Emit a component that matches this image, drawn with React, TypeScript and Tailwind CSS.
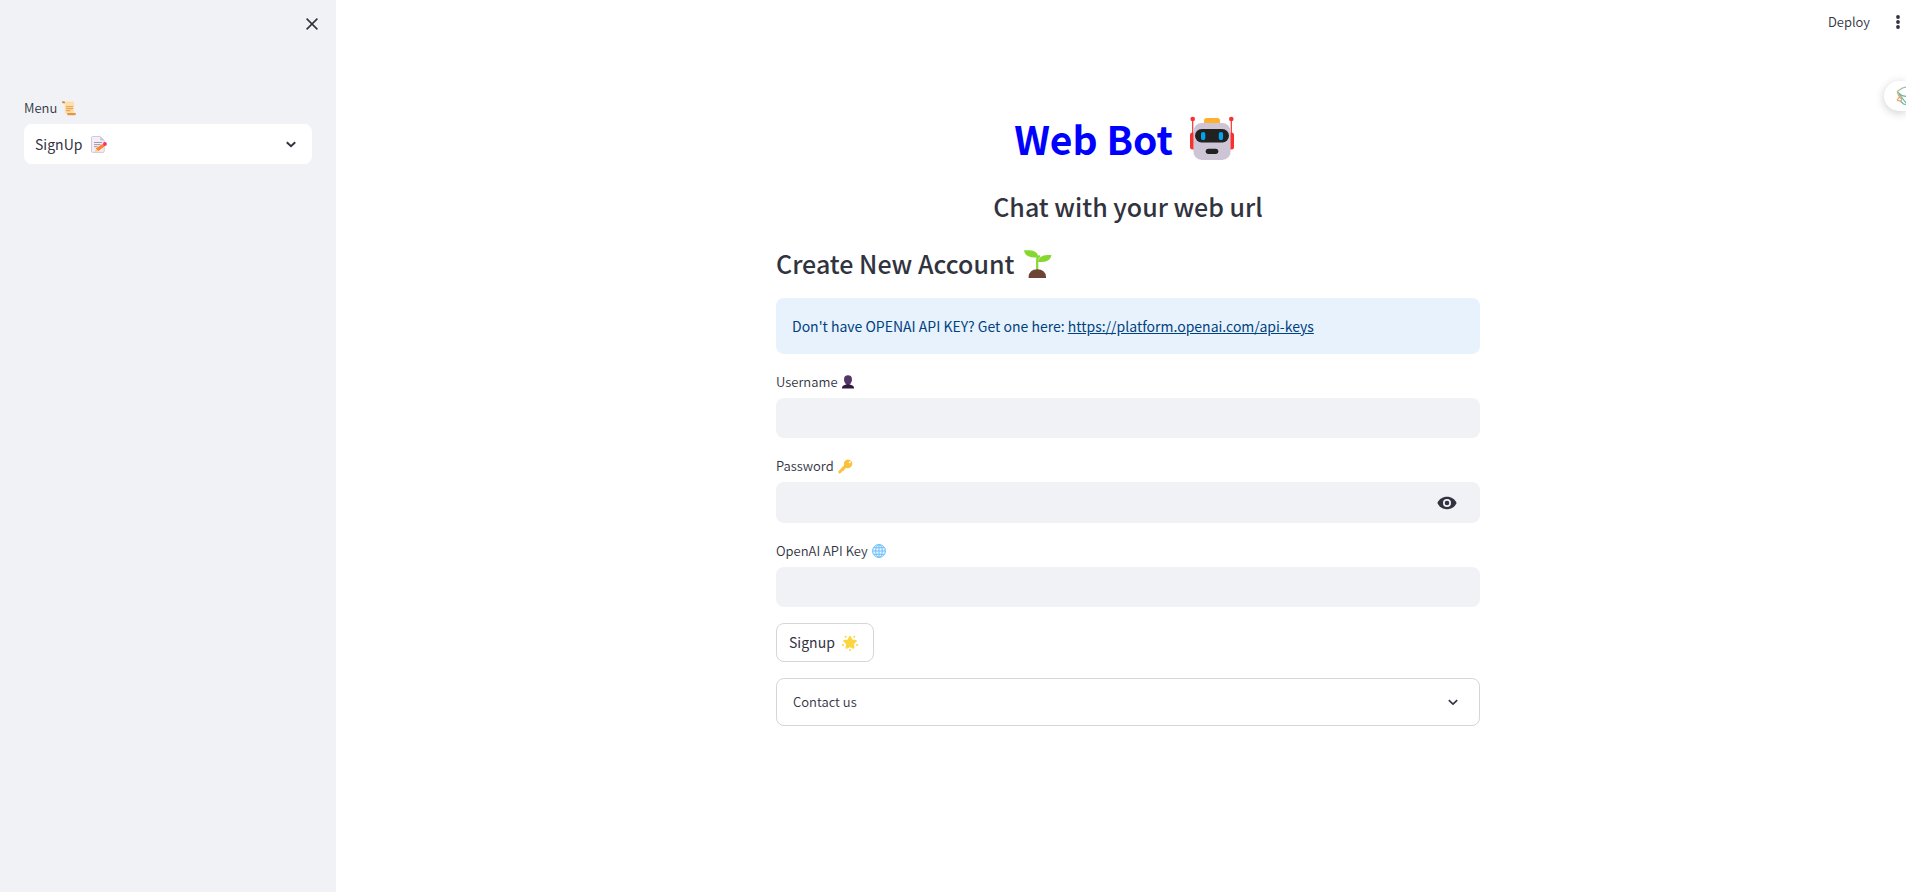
import type { ReactNode, SVGProps } from "react";

function Emoji({ label, children, ...props }: SVGProps<SVGSVGElement> & { label: string; children: ReactNode }) {
  return (
    <svg role="img" aria-label={label} {...props}>
      {children}
    </svg>
  );
}

function Scroll() {
  return (
    <Emoji label="scroll" viewBox="0 0 15 15" className="h-[15px] w-[15px] shrink-0">
      <path d="M1.6 .5H10.8Q12 .5 12 1.8V13H4.6Q2.8 13 2.8 11.2V3Z" fill="#ffdea7" />
      <path d="M0 1.2Q0 .3 1 .3H2Q3 .5 3 1.5V2.2H1Q0 2 0 1.2Z" fill="#d3883e" />
      <path d="M4.8 12H13.3Q14 12 14 12.8 14 14.2 12.6 14.2H5.2Q6 13.4 4.8 12Z" fill="#e19747" />
      <path d="M4 5.6H11M4 7.6H11M4 9.6H8.4" stroke="#e8a860" strokeWidth="1.1" />
    </Emoji>
  );
}

function Memo() {
  return (
    <Emoji label="memo" viewBox="0 0 16 17" className="h-[17px] w-4">
      <path d="M1.6 .5H9.2L13.2 4.5V15.3Q13.2 16.4 12 16.4H1.6Q.5 16.4 .5 15.3V1.6Q.5 .5 1.6 .5Z" fill="#f3eef8" stroke="#cdc4d6" strokeWidth=".9" />
      <path d="M9.2 .5V3.4Q9.2 4.5 10.3 4.5H13.2Z" fill="#cdc4d6" />
      <path d="M3 6.5H11M3 8.6H9.5M3 10.7H6.5" stroke="#998ea4" strokeWidth=".9" />
      <path d="M11.4 8 13.7 10.3 7.2 15.2 4.8 12.6Z" fill="#ff822d" />
      <path d="M4.8 12.6 7.2 15.2 4 16Z" fill="#ffce7c" />
      <circle cx="13.9" cy="8" r="1.9" fill="#f92f60" />
    </Emoji>
  );
}

function Robot() {
  return (
    <Emoji label="robot" viewBox="0 0 44 45" className="h-[45px] w-11">
      <path d="M2.7 3V20M41.3 3V20" stroke="#f8312f" strokeWidth="1.2" />
      <circle cx="2.7" cy="3" r="2.3" fill="#f8312f" />
      <circle cx="41.3" cy="3" r="2.3" fill="#f8312f" />
      <rect x="0" y="16.5" width="7" height="17" rx="2.5" fill="#f8312f" />
      <rect x="37" y="16.5" width="7" height="17" rx="2.5" fill="#f8312f" />
      <rect x="14" y="2" width="16" height="8" rx="2.5" fill="#ffb02e" />
      <rect x="3.4" y="7" width="37.2" height="37" rx="8.5" fill="#cdc4d6" />
      <rect x="5" y="13" width="34" height="13.5" rx="6.7" fill="#212121" />
      <rect x="11" y="16" width="4.3" height="8.2" rx="2.1" fill="#00a6ed" />
      <rect x="28.8" y="16" width="4.3" height="8.2" rx="2.1" fill="#00a6ed" />
      <rect x="15.7" y="32.7" width="12.6" height="5.2" rx="2.6" fill="#212121" />
    </Emoji>
  );
}

function Seedling() {
  return (
    <Emoji label="seedling" viewBox="0 0 28 28" className="h-7 w-7">
      <path d="M13.2 20V9.5Q13.2 7 16 6" fill="none" stroke="#86d72f" strokeWidth="2.2" />
      <path d="M0 .2H5.3Q14.3 .6 14.3 7.6H10.5Q1 7.2 0 .2Z" fill="#86d72f" />
      <path d="M27.5 5.1H23.5Q14.8 5.4 13.7 12H18Q26.5 11.8 27.5 5.1Z" fill="#86d72f" />
      <path d="M4.6 28V26.8Q5.3 19.2 13.3 19.2T22 26.8V28Z" fill="#6d4534" />
    </Emoji>
  );
}

function Bust() {
  return (
    <Emoji label="bust in silhouette" viewBox="0 0 12 14" className="h-3.5 w-3">
      <path d="M0 13.5V12.6Q.1 10.5 2.6 10L4.4 9.4V8H7.6V9.4L9.4 10Q11.9 10.5 12 12.6V13.5Z" fill="#321b41" />
      <path d="M2.1 4Q2.1 .3 6 .3T9.9 4V5.2Q9.4 9.4 6 9.4T2.1 5.2Z" fill="#533566" />
    </Emoji>
  );
}

function KeyEmoji() {
  return (
    <Emoji label="key" viewBox="0 0 15 15" className="h-[15px] w-[15px]">
      <path fillRule="evenodd" d="M9.9 .4A4.4 4.4 0 1 1 8.6 9L7.4 9.3 7.2 10.4 6 10.5 5.6 12 4.2 12.2 3 13.8Q2 14.8 1 14.3 .2 13.8 .3 12.4L6.1 6.3Q5 1.3 9.9 .4ZM11.2 2.4A1 1 0 1 0 12.6 3.8 1 1 0 0 0 11.2 2.4Z" fill="#f9c23c" />
    </Emoji>
  );
}

function Globe() {
  return (
    <Emoji label="globe with meridians" viewBox="0 0 14 14" className="h-3.5 w-3.5">
      <circle cx="7" cy="7" r="7" fill="#e5f4ff" />
      <g fill="none" stroke="#6fc0fa" strokeWidth="1">
        <circle cx="7" cy="7" r="6.4" />
        <ellipse cx="7" cy="7" rx="3.3" ry="6.4" />
        <path d="M7 .6V13.4M.6 7H13.4M1.5 3.7H12.5M1.5 10.3H12.5" />
      </g>
    </Emoji>
  );
}

function Star() {
  return (
    <Emoji label="glowing star" viewBox="0 0 16 16" className="h-4 w-4">
      <path d="M8 1.6 9.8 5.2 14 5.8 11 8.7 11.7 13 8 11.2 4.3 13 5 8.7 2 5.8 6.2 5.2Z" fill="#fcd53f" stroke="#fcd53f" strokeWidth="1.6" strokeLinejoin="round" />
      <g fill="#fcd53f">
        <circle cx="3.6" cy="1.7" r="1" />
        <circle cx="12.4" cy="1.7" r="1" />
        <circle cx="1" cy="10" r="1" />
        <circle cx="15" cy="10" r="1" />
        <circle cx="8" cy="15" r="1" />
      </g>
    </Emoji>
  );
}

function Chevron({ className }: { className: string }) {
  return (
    <svg aria-hidden="true" viewBox="0 0 10 7" className={className}>
      <path d="M.8 1.2 5 5.2 9.2 1.2" fill="none" stroke="currentColor" />
    </svg>
  );
}

function Field({ id, label, icon, type = "text" }: { id: string; label: string; icon: ReactNode; type?: string }) {
  return (
    <div className="flex flex-col">
      <label htmlFor={id} className="flex h-7 items-start gap-1 text-[13px] leading-6">
        {label}
        <span className="flex h-6 items-center">{icon}</span>
      </label>
      <div className="flex min-h-10 rounded-lg bg-[#f0f2f6]">
        <input id={id} type={type} className="min-w-0 flex-1 bg-transparent px-3 text-[14px] outline-none" />
        {type === "password" && (
          <button type="button" aria-label="Show password" className="flex h-[41px] w-[66px] items-center justify-center">
            <svg viewBox="0 0 20 14" className="h-3.5 w-5">
              <path fillRule="evenodd" d="M10 .8C5.6 .8 2 3.2 .4 7 2 10.8 5.6 13.2 10 13.2S18 10.8 19.6 7C18 3.2 14.4 .8 10 .8ZM10 11A4 4 0 1 1 10 3 4 4 0 0 1 10 11ZM10 9.3A2.3 2.3 0 1 0 10 4.7 2.3 2.3 0 0 0 10 9.3Z" fill="currentColor" />
            </svg>
          </button>
        )}
      </div>
    </div>
  );
}

export default function App() {
  return (
    <div className="flex min-h-screen overflow-hidden bg-white font-['Noto_Sans_CJK_SC','Noto_Sans',sans-serif] font-[350] text-[#31333f]">
      <aside className="w-[336px] shrink-0 bg-[#f0f2f6] px-6">
        <div className="flex h-12 items-center justify-end">
          <button type="button" aria-label="Close sidebar" className="flex h-6 w-6 translate-x-3 items-center justify-center">
            <svg viewBox="0 0 12 12" className="h-3 w-3">
              <path d="M.6 .6 11.4 11.4M11.4 .6 .6 11.4" stroke="currentColor" strokeWidth="1.6" />
            </svg>
          </button>
        </div>
        <label htmlFor="menu" className="mt-12 flex h-7 items-start gap-[5px] text-[13px] leading-6">
          Menu
          <span className="flex h-6 items-center"><Scroll /></span>
        </label>
        <div className="relative">
          <select id="menu" className="h-10 w-full appearance-none rounded-lg bg-white px-[11px] text-[14px] font-normal outline-none">
            <option>SignUp</option>
            <option>Login</option>
          </select>
          <span className="pointer-events-none absolute top-3 left-[67px]"><Memo /></span>
          <Chevron className="pointer-events-none absolute top-[17px] right-4 h-[7px] w-2.5 stroke-2" />
        </div>
      </aside>

      <div className="relative min-w-0 flex-1">
        <header className="flex h-11 items-center justify-end gap-6 pr-1">
          <button type="button" className="text-[13px]">Deploy</button>
          <button type="button" aria-label="More options" className="flex w-2 justify-center">
            <svg viewBox="0 0 4 14" className="h-3.5 w-1" fill="currentColor">
              <circle cx="2" cy="2" r="1.9" />
              <circle cx="2" cy="7" r="1.9" />
              <circle cx="2" cy="12" r="1.9" />
            </svg>
          </button>
        </header>

        <button type="button" aria-label="Open assistant" className="absolute top-[81px] right-0 flex h-[30px] w-[22px] items-center justify-end rounded-l-full bg-white shadow-[0_2px_10px_rgba(0,0,0,0.2)]">
          <svg viewBox="0 0 10 20" className="h-5 w-2.5" fill="none" strokeWidth="1.2">
            <path d="M10 1.2 6.5 2 1.2 5.6" stroke="#9dbb9c" />
            <path d="M1.2 5.6 6 9.6 10 10.4" stroke="#62b7a1" />
            <path d="M1.2 5.6 2.4 9 4 11.6M1 14.4 3 11.4 6 12.6 5 15 1 14.4" stroke="#eda26c" />
            <path d="M3 8 10 17M4.5 15.2 7.5 18 10 18.4" stroke="#62b7a1" />
          </svg>
        </button>

        <main className="pl-[14px]">
          <div className="mx-auto max-w-[704px] pt-[58px]">
            <h1 className="flex h-[73px] items-center justify-center gap-[17px] pr-2 text-[39px] font-bold text-[#0000ff]">
              Web Bot
              <Robot />
            </h1>
            <h2 className="flex h-16 items-center justify-center text-[25px] font-medium">Chat with your web url</h2>
            <h2 className="flex h-[50px] items-center gap-2.5 text-[25px] font-medium">
              Create New Account
              <Seedling />
            </h2>
            <div className="mt-[9px] flex h-14 items-center rounded-lg bg-[#e8f2fc] px-4 text-[14px] font-normal text-[#004280]">
              <p>
                Don't have OPENAI API KEY? Get one here:{" "}
                <a href="https://platform.openai.com/api-keys" className="underline">https://platform.openai.com/api-keys</a>
              </p>
            </div>
            <form className="mt-4 flex flex-col gap-4">
              <Field id="username" label="Username" icon={<Bust />} />
              <Field id="password" label="Password" icon={<KeyEmoji />} type="password" />
              <Field id="api-key" label="OpenAI API Key" icon={<Globe />} />
              <button type="button" className="flex h-[39px] items-center gap-[7px] self-start rounded-lg border border-[#d6d6d9] pr-[15px] pl-3 text-[14px] font-normal">
                Signup
                <Star />
              </button>
            </form>
            <button type="button" aria-expanded="false" className="mt-4 flex h-12 w-full items-center justify-between rounded-lg border border-[#d6d6d9] pr-[21px] pl-4 text-[13px]">
              Contact us
              <Chevron className="h-[7px] w-2.5 stroke-[1.6]" />
            </button>
          </div>
        </main>
      </div>
    </div>
  );
}
